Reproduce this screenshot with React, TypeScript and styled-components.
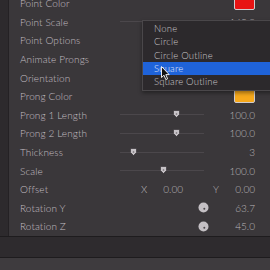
import React from 'react';
import styled, {createGlobalStyle} from 'styled-components';

const GlobalStyle = createGlobalStyle`
  html, body {
    margin: 0;
    padding: 0;
    background: #3a373a;
    overflow: hidden;
  }
  body {
    font-family: Lato, "Open Sans", sans-serif;
  }
`;

const Screen = styled.div`
  position: relative;
  width: 270px;
  height: 270px;
  overflow: hidden;
  background: #3a373a;
  display: flex;
  flex-direction: column;
`;

const Body = styled.div`
  display: flex;
  margin-top: -6px;
`;

const Strip = styled.div`
  width: 8px;
  background: #2d2a2d;
  border-right: 1px solid #242124;
`;

const Rows = styled.div`
  flex: 1;
  padding-left: 11px;
  padding-right: 15px;
`;

const Row = styled.div`
  display: grid;
  grid-template-columns: 100px 84px 1fr;
  align-items: center;
  height: 18.6px;
`;

const Label = styled.div`
  font-size: 10px;
  font-weight: 300;
  color: #c2bec2;
  letter-spacing: 0.1px;
  white-space: nowrap;
`;

const Value = styled.div`
  font-size: 10px;
  font-weight: 300;
  color: #b9b5b9;
  text-align: right;
  justify-self: end;
`;

const Track = styled.div`
  position: relative;
  height: 1px;
  background: #4b474b;
`;

const Thumb = styled.svg`
  position: absolute;
  top: -4px;
  margin-left: -3px;
`;

const Swatch = styled.div<{ $color: string }>`
  justify-self: end;
  width: 19px;
  height: 12px;
  border-radius: 2px;
  border: 1px solid #cfcbcf;
  background: ${p => p.$color};
`;

const KnobWrap = styled.div`
  display: flex;
  justify-content: flex-end;
  margin-right: -5px;
`;

const XYGroup = styled.div`
  grid-column: 2 / 4;
  display: grid;
  grid-template-columns: 42px 42px;
  column-gap: 30px;
  padding-left: 21px;
`;

const XYCell = styled.div`
  display: flex;
  justify-content: space-between;
  font-size: 10px;
  font-weight: 300;
  color: #b9b5b9;
`;

const Footer = styled.div`
  height: 20px;
  background: #2e2b2e;
  border-top: 1px solid #1e1c1e;
  border-bottom: 1px solid #1e1c1e;
`;

const Bottom = styled.div`
  flex: 1;
  background: #3e3b3e;
`;

const Menu = styled.div`
  position: absolute;
  left: 142px;
  top: 20px;
  width: 130px;
  padding: 1px 0 2px;
  background: #2c292c;
  border: 1px solid #4a474a;
  box-shadow: 0 2px 4px rgba(0, 0, 0, 0.4);
`;

const MenuItem = styled.div<{ $active?: boolean }>`
  height: 13.3px;
  line-height: 13.3px;
  padding-left: 11px;
  font-size: 9.5px;
  font-weight: 300;
  letter-spacing: 0.2px;
  color: ${p => (p.$active ? '#e4eafa' : '#cac6ca')};
  background: ${p => (p.$active ? '#1f63d9' : 'transparent')};
`;

const Cursor = styled.svg`
  position: absolute;
  left: 161px;
  top: 66px;
`;

const Slider = ({pos}: { pos?: number }) => (
    <Track>
        {pos !== undefined && (
            <Thumb width="7" height="8" viewBox="0 0 7 8" style={{left: pos}}>
                <path d="M0.5 0.5 H6.5 V4.5 L3.5 7.5 L0.5 4.5 Z" fill="#c6c2c6" stroke="#2a272a" strokeWidth="0.6"/>
                <circle cx="3.5" cy="4" r="0.8" fill="#6a666a"/>
            </Thumb>
        )}
    </Track>
);

const Knob = () => (
    <KnobWrap>
        <svg width="11" height="11" viewBox="0 0 11 11">
            <circle cx="5.5" cy="5.5" r="5" fill="#c4c0c4"/>
            <circle cx="6.3" cy="6.8" r="1" fill="#4a464a"/>
        </svg>
    </KnobWrap>
);

const options = ['None', 'Circle', 'Circle Outline', 'Square', 'Square Outline'];

export default function App() {
    return (
        <Screen>
            <GlobalStyle/>
            <Body>
                <Strip/>
                <Rows>
                    <Row>
                        <Label>Point Color</Label>
                        <div/>
                        <Swatch $color="#e81313"/>
                    </Row>
                    <Row>
                        <Label>Point Scale</Label>
                        <Slider/>
                        <Value>145.0</Value>
                    </Row>
                    <Row><Label>Point Options</Label></Row>
                    <Row><Label>Animate Prongs</Label></Row>
                    <Row><Label>Orientation</Label></Row>
                    <Row>
                        <Label>Prong Color</Label>
                        <div/>
                        <Swatch $color="#f6a91c"/>
                    </Row>
                    <Row>
                        <Label>Prong 1 Length</Label>
                        <Slider pos={56}/>
                        <Value>100.0</Value>
                    </Row>
                    <Row>
                        <Label>Prong 2 Length</Label>
                        <Slider pos={56}/>
                        <Value>100.0</Value>
                    </Row>
                    <Row>
                        <Label>Thickness</Label>
                        <Slider pos={13}/>
                        <Value>3</Value>
                    </Row>
                    <Row>
                        <Label>Scale</Label>
                        <Slider pos={43}/>
                        <Value>100.0</Value>
                    </Row>
                    <Row>
                        <Label>Offset</Label>
                        <XYGroup>
                            <XYCell><span>X</span><span>0.00</span></XYCell>
                            <XYCell><span>Y</span><span>0.00</span></XYCell>
                        </XYGroup>
                    </Row>
                    <Row>
                        <Label>Rotation Y</Label>
                        <Knob/>
                        <Value>63.7</Value>
                    </Row>
                    <Row>
                        <Label>Rotation Z</Label>
                        <Knob/>
                        <Value>45.0</Value>
                    </Row>
                </Rows>
            </Body>
            <Footer/>
            <Bottom/>
            <Menu>
                {options.map(o => (
                    <MenuItem key={o} $active={o === 'Square'}>{o}</MenuItem>
                ))}
            </Menu>
            <Cursor width="10" height="15" viewBox="0 0 10 15">
                <path d="M0.5 0.5 L0.5 11.5 L3 9.2 L4.8 13.6 L6.6 12.8 L4.8 8.6 L8.2 8.6 Z" fill="#111" stroke="#fff" strokeWidth="0.9" strokeLinejoin="round"/>
            </Cursor>
        </Screen>
    );
}
